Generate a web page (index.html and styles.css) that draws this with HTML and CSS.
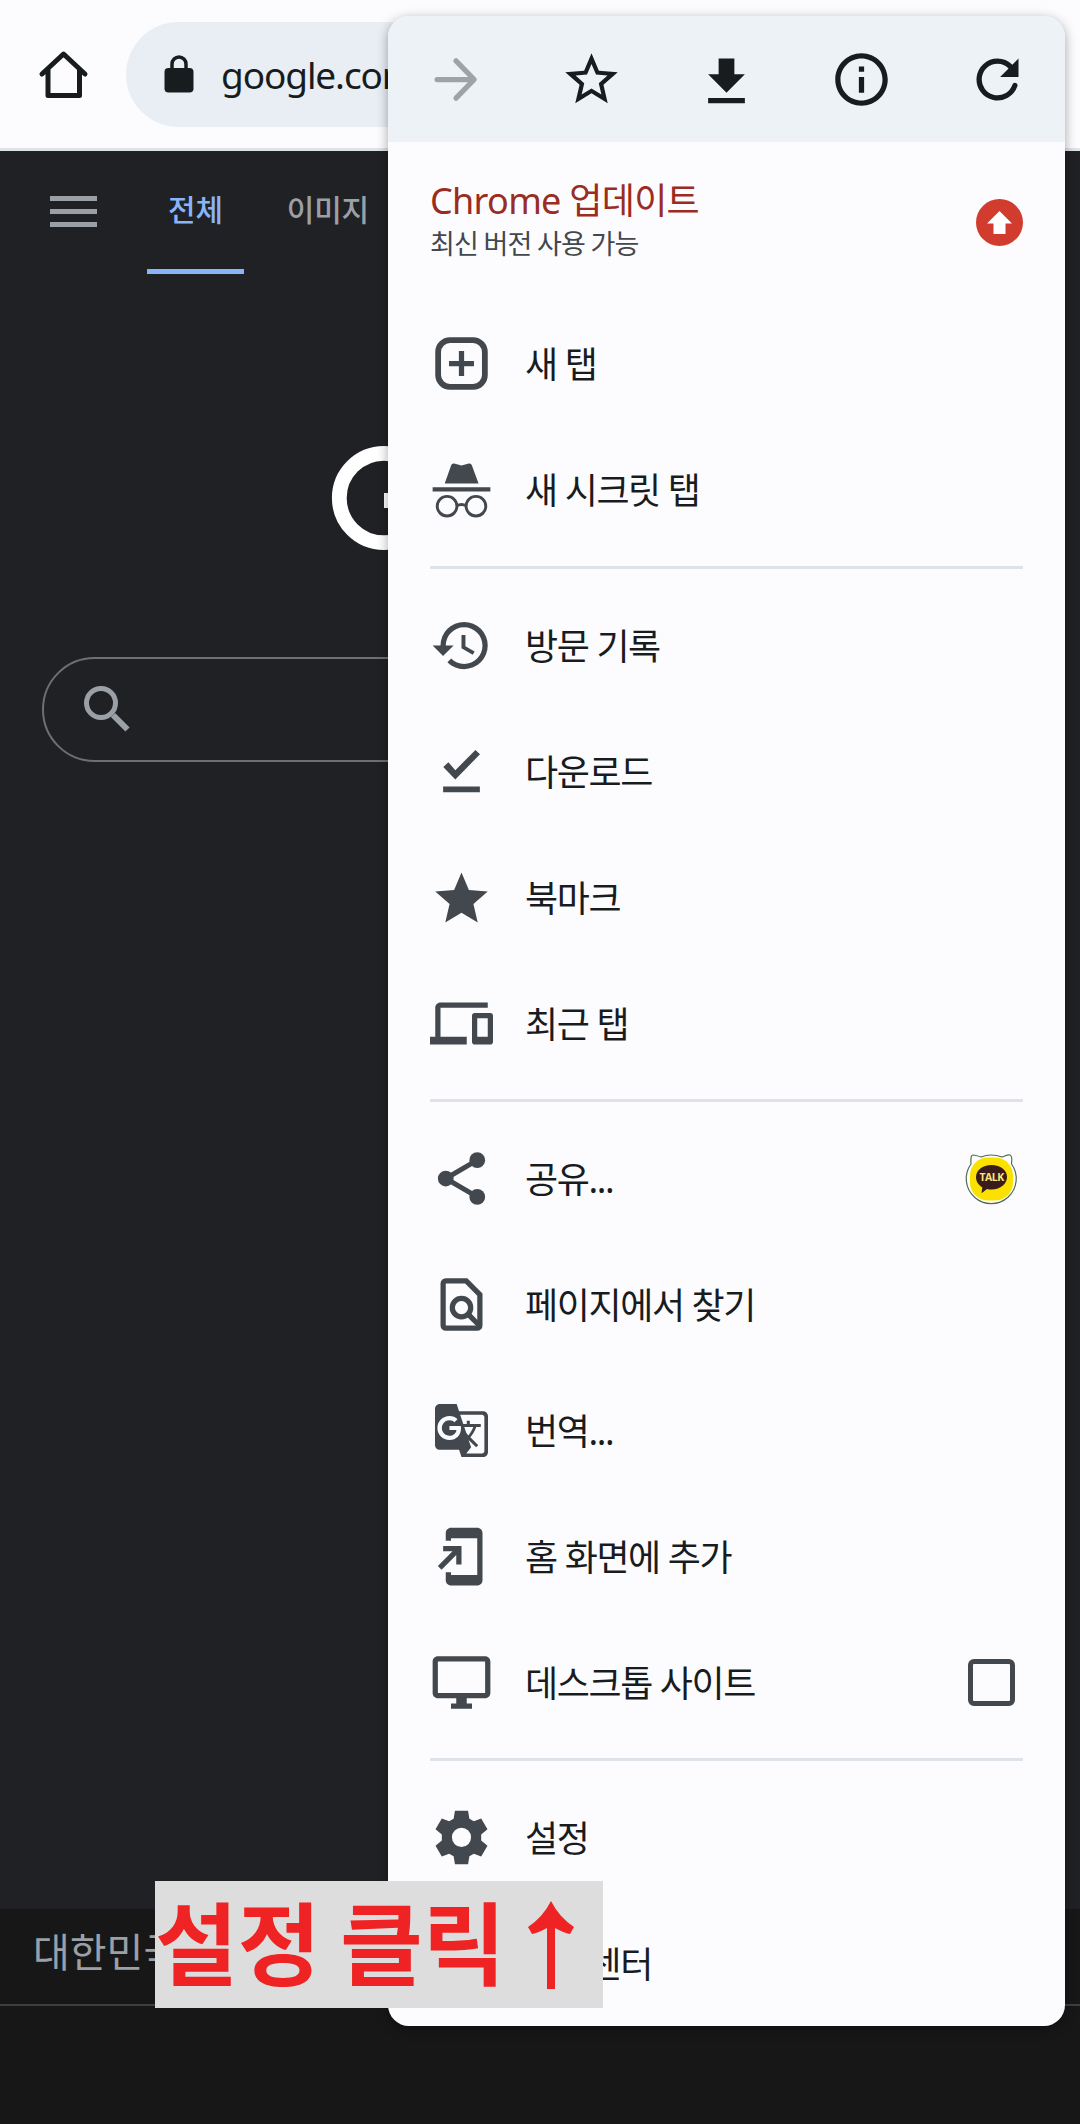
FILE: index.html
```html
<!DOCTYPE html>
<html lang="ko">
<head>
    <meta charset="UTF-8">
    <title>Google</title>
    <link rel="stylesheet" href="styles.css">
</head>
<body>
    <div class="screen">
        <header class="toolbar">
            <svg class="home" viewBox="0 0 63 63"><path d="M10 31 31.500 11 53 31M16 27v25.500h31.500V27"/></svg>
            <div class="url">
                <svg class="lock" viewBox="0 0 30 38"><path d="M8 14V9a7 7 0 0 1 14 0v5" fill="none" stroke="#191c1e" stroke-width="3.500"/><rect x="0.500" y="13" width="29" height="24.500" rx="4" fill="#191c1e"/></svg>
                <span>google.com</span>
            </div>
        </header>
        <main class="page">
            <nav class="tabs">
                <div class="burger"><i></i><i></i><i></i></div>
                <span class="tab active">전체</span>
                <span class="tab">이미지</span>
            </nav>
            <div class="logo">
                <svg viewBox="0 0 106 106"><circle cx="53" cy="53" r="44.700" fill="none" stroke="#fff" stroke-width="14.800"/><path d="M53 48h45v15H53z" fill="#fff"/></svg>
            </div>
            <div class="search">
                <svg viewBox="0 0 46 46"><circle cx="17" cy="17" r="14.500" fill="none" stroke="#9aa0a6" stroke-width="5"/><path d="m29 29 14.500 14.500" stroke="#9aa0a6" stroke-width="6"/></svg>
            </div>
        </main>
        <footer class="footer">
            <div class="country">대한민국</div>
        </footer>

        <div class="menu">
            <div class="menu-top">
                <svg viewBox="0 0 24 24"><path d="M5 12h13.500M12.200 4.900l6.900 7.100-6.900 7.100" fill="none" stroke="#9fa3a6" stroke-width="2" stroke-linecap="round" stroke-linejoin="round"/></svg>
                <svg viewBox="0 0 24 24"><path d="m22 9.240-7.190-.62L12 2 9.190 8.630 2 9.240l5.460 4.730L5.820 21 12 17.270 18.180 21l-1.630-7.030L22 9.240zM12 15.400l-3.760 2.270 1-4.280-3.320-2.880 4.380-.38L12 6.100l1.710 4.040 4.380.38-3.320 2.880 1 4.280L12 15.400z"/></svg>
                <svg viewBox="0 -1 24 24"><path d="M19 9h-4V3H9v6H5l7 7 7-7zM5 18v2h14v-2H5z"/></svg>
                <svg viewBox="0 0 24 24"><path d="M11 7h2v2h-2zm0 4h2v6h-2zm1-9C6.480 2 2 6.480 2 12s4.480 10 10 10 10-4.480 10-10S17.520 2 12 2zm0 18c-4.410 0-8-3.590-8-8s3.590-8 8-8 8 3.590 8 8-3.590 8-8 8z"/></svg>
                <svg viewBox="0 0 24 24"><path d="M17.650 6.350A7.960 7.960 0 0 0 12 4a8 8 0 1 0 7.600 10.500 1 1 0 0 0-1.900-.6A6 6 0 1 1 12 6c1.660 0 3.140.69 4.220 1.780L13 11h7V4l-2.350 2.350z"/></svg>
            </div>

            <div class="update">
                <div>
                    <div class="update-title">Chrome 업데이트</div>
                    <div class="update-sub">최신 버전 사용 가능</div>
                </div>
                <svg viewBox="0 0 47 47"><circle cx="23.500" cy="23.500" r="23.500" fill="#d13c2f"/><path d="M23.500 12 36 24.500h-6.500V35h-12V24.500H11z" fill="#fff"/></svg>
            </div>

            <div class="item">
                <svg viewBox="0 0 24 24"><rect x="3.100" y="3.100" width="17.800" height="17.800" rx="4.500" fill="none" stroke="#42484d" stroke-width="2.200"/><path d="M11 7.250h2V11h3.750v2H13v3.750h-2V13H7.250v-2H11z"/></svg>
                <span>새 탭</span>
            </div>
            <div class="item">
                <svg viewBox="0 0 24 24"><path d="M5.600 9.700 8.100 2.700Q8.400 1.900 9.200 2.100L12 2.900l2.800-.8q.8-.2 1.100.6l2.600 7zM1 11.100h22v1.700H1z"/><g fill="none" stroke="#42484d" stroke-width="1.100"><circle cx="6.500" cy="18.350" r="3.750"/><circle cx="17.500" cy="18.350" r="3.750"/><path d="M10.200 18.200q1.800-1 3.600 0"/></g></svg>
                <span>새 시크릿 탭</span>
            </div>
            <hr>
            <div class="item">
                <svg viewBox="0 0 24 24"><path d="M13 3a9 9 0 0 0-9 9H1l3.890 3.890.07.14L9 12H6c0-3.870 3.130-7 7-7s7 3.130 7 7-3.130 7-7 7c-1.930 0-3.680-.79-4.940-2.060l-1.420 1.420C8.270 19.990 10.510 21 13 21a9 9 0 0 0 0-18zm-1 5v5l4.280 2.540.72-1.210-3.500-2.080V8H12z"/></svg>
                <span>방문 기록</span>
            </div>
            <div class="item">
                <svg viewBox="0 0 24 24"><path d="M5.050 10.300 7 8.500l2.650 3L17.300 3.850l1.750 1.600L9.650 15zM5 17.700h14v2.200H5z"/></svg>
                <span>다운로드</span>
            </div>
            <div class="item">
                <svg viewBox="0 -0.500 24 24"><path d="M12 17.270 18.180 21l-1.640-7.030L22 9.240l-7.190-.61L12 2 9.190 8.630 2 9.240l5.460 4.730L5.820 21z"/></svg>
                <span>북마크</span>
            </div>
            <div class="item">
                <svg viewBox="0 0 24 24"><path d="M4 6h18V4H4c-1.100 0-2 .9-2 2v11H0v3h14v-3H4V6zm19 2h-6c-.55 0-1 .45-1 1v10c0 .55.45 1 1 1h6c.55 0 1-.45 1-1V9c0-.55-.45-1-1-1zm-1 9h-4v-7h4v7z"/></svg>
                <span>최근 탭</span>
            </div>
            <hr>
            <div class="item">
                <svg viewBox="0 0 24 24"><path d="M18 5 6 12l12 7" fill="none" stroke="#42484d" stroke-width="1.900"/><circle cx="18" cy="5" r="3"/><circle cx="6" cy="12" r="3"/><circle cx="18" cy="19" r="3"/></svg>
                <span>공유...</span>
                <svg class="end" viewBox="0 4 63 63"><path d="M11 21c-.5-5 0-9 2-9s5 1 8 2q10-4 21 0c3-1 6-2.500 8-2s2 5 1.500 9a25 25 0 1 1-40.500 0z" fill="#fffffa" stroke="#4f6b4f" stroke-width="1.200"/><rect x="10" y="14.500" width="43" height="43" rx="18" fill="#fae100"/><path d="M31.500 22c-9 0-15.500 5.300-15.500 12 0 4.500 2.500 8 6.300 10.300l-.8 6 5.500-4.300q2 .5 4.500.5c9 0 15.500-5.800 15.500-12.500S40.500 22 31.500 22z" fill="#3a1d1a"/><text class="talk" x="31.500" y="38.300">TALK</text></svg>
            </div>
            <div class="item">
                <svg viewBox="0 0 24 24"><g fill="none" stroke="#42484d" stroke-width="2"><path d="M6 3h7.800L19 8.200V20a1 1 0 0 1-1 1H6a1 1 0 0 1-1-1V4a1 1 0 0 1 1-1z"/><circle cx="12" cy="13.200" r="3.500"/><path d="m14.500 15.700 4.300 4.300"/></g></svg>
                <span>페이지에서 찾기</span>
            </div>
            <div class="item">
                <svg viewBox="-1.070 -1.070 26.150 26.150"><path d="M21 4H11l-1-3H3c-1.100 0-2 .9-2 2v15c0 1.100.9 2 2 2h8l1 3h9c1.100 0 2-.9 2-2V6c0-1.100-.9-2-2-2zM7 16c-2.760 0-5-2.240-5-5s2.240-5 5-5c1.350 0 2.480.5 3.350 1.300L9.030 8.570c-.38-.36-1.040-.78-2.030-.78-1.740 0-3.150 1.440-3.150 3.210S5.260 14.210 7 14.210c2.010 0 2.840-1.440 2.920-2.410H7v-1.710h4.680c.07.31.12.61.12 1.020C11.800 13.970 9.890 16 7 16zm6.170-5.420h3.700c-.43 1.250-1.110 2.430-2.050 3.470-.31-.35-.6-.72-.86-1.100l-.79-2.370zm8.330 9.920c0 .55-.45 1-1 1H14l2-2.500-1.040-3.100 3.100 3.100.92-.92-3.300-3.250.02-.02c1.130-1.250 1.930-2.690 2.400-4.220H20v-1.300h-4.530V8h-1.290v1.290h-1.440L11.460 5.500h9.040c.55 0 1 .45 1 1v14z"/></svg>
                <span>번역...</span>
            </div>
            <div class="item">
                <svg viewBox="0 0 24 24"><path d="M18 1H8c-1.100 0-2 .9-2 2v3h2V5h10v14H8v-1H6v3c0 1.100.9 2 2 2h10c1.100 0 2-.9 2-2V3c0-1.100-.9-2-2-2zM10 15h2V8H5v2h3.590L3 15.590 4.410 17 10 11.410z"/></svg>
                <span>홈 화면에 추가</span>
            </div>
            <div class="item">
                <svg viewBox="0 0 24 24"><path d="M21 2H3c-1.100 0-2 .9-2 2v12c0 1.100.9 2 2 2h7v2H8v2h8v-2h-2v-2h7c1.100 0 2-.9 2-2V4c0-1.100-.9-2-2-2zm0 14H3V4h18v12z"/></svg>
                <span>데스크톱 사이트</span>
                <div class="checkbox"></div>
            </div>
            <hr>
            <div class="item">
                <svg viewBox="0 0 24 24"><path fill-rule="evenodd" d="M9.500 1.800h5l.5 3.100 1.700.9 2.800-1 2.400 4.100-2.400 2v2.200l2.400 2-2.400 4.100-2.800-1-1.700.9-.5 3.100h-5L9 19.100l-1.700-.9-2.800 1-2.400-4.100 2.400-2v-2.200l-2.400-2 2.400-4.100 2.800 1L9 4.900zM12 8.300a3.650 3.650 0 1 0 0 7.300 3.650 3.650 0 0 0 0-7.300z"/></svg>
                <span>설정</span>
            </div>
            <div class="item">
                <svg viewBox="0 0 24 24"></svg>
                <span>고객센터</span>
            </div>
        </div>

        <div class="callout"><span>설정 클릭</span><svg viewBox="0 0 46 88"><path d="M19 88V27Q10 32 4 33L0 26Q15 16 23 0q8 16 23 26l-4 7q-6-1-15-6v61z"/></svg></div>
    </div>
</body>
</html>
```
FILE: styles.css
```css
* { box-sizing: border-box; }
body { margin: 0; font-family: "Noto Sans", "Noto Sans CJK KR", sans-serif; background: #171717; color: #191c1e; }
svg { display: block; flex: none; }
.screen { position: relative; width: 1080px; height: 2124px; overflow: hidden; display: flex; flex-direction: column; }

/* browser bar */
.toolbar { height: 151px; background: #fcfcff; border-bottom: 3px solid #dde3e7; padding: 22px 0 0 32px; display: flex; align-items: flex-start; gap: 31px; }
.home { width: 63px; height: 63px; margin-top: 21px; fill: none; stroke: #191c1e; stroke-width: 5; stroke-linecap: round; stroke-linejoin: round; }
.url { width: 800px; height: 105px; border-radius: 53px; background: #e8eef4; padding: 0 38px; display: flex; align-items: center; gap: 27px; font-size: 37px; letter-spacing: -1.1px; }
.lock { width: 30px; height: 38px; margin-bottom: 2px; }

/* page behind the menu */
.page { height: 1758px; background: #202124; }
.tabs { height: 123px; display: flex; padding-left: 50px; }
.burger { width: 47px; margin: 45px 50px 0 0; display: flex; flex-direction: column; gap: 8px; }
.burger i { height: 5px; background: #9aa0a6; }
.tab { height: 123px; line-height: 117px; padding: 0 21px; margin-right: 22px; font-size: 30px; font-weight: 500; letter-spacing: -0.2px; color: #9aa0a6; }
.tab.active { color: #8ab4f8; border-bottom: 5px solid #8ab4f8; }
.logo { padding: 171px 0 0 331px; }
.logo svg { width: 106px; height: 106px; }
.search { height: 105px; margin: 106px 42px 0; border: 2px solid #6c7074; border-radius: 53px; padding: 27px 40px; }
.search svg { width: 46px; height: 46px; }

.footer { flex: 1; background: #171717; }
.country { height: 97px; line-height: 86px; padding-left: 33px; border-bottom: 2px solid #3c4043; color: #9aa0a6; font-size: 40px; }

/* menu */
.menu { position: absolute; left: 388px; top: 16px; width: 677px; height: 2010px; background: #fcfcff; border-radius: 21px; overflow: hidden; box-shadow: 0 3px 12px rgba(0, 0, 0, 0.35); }
.menu-top { height: 126px; background: #edf2f6; display: flex; align-items: center; justify-content: space-around; }
.menu-top svg { width: 63px; height: 63px; fill: #191c1e; }
.update { height: 158px; padding: 0 42px; display: flex; align-items: center; justify-content: space-between; }
.update-title { font-size: 36px; line-height: 45px; letter-spacing: -0.7px; color: #9a2c22; }
.update-sub { font-size: 27px; line-height: 42px; letter-spacing: -0.9px; word-spacing: -0.5px; color: #42484d; }
.update svg { width: 47px; height: 47px; margin-top: 2px; }
.item { height: 126px; padding: 0 42px; display: flex; align-items: center; gap: 32px; font-size: 36px; letter-spacing: -1.4px; word-spacing: 0; }
.item span { margin-top: -2px; }
.item svg { width: 63px; height: 63px; fill: #42484d; }
.item .end { margin-left: auto; }
.talk { font: bold 10.5px "Open Sans", sans-serif; letter-spacing: -0.5px; text-anchor: middle; fill: #fae57a; }
.checkbox { width: 47px; height: 47px; margin: 0 8px 0 auto; border: 5px solid #42484d; border-radius: 6px; }
.menu hr { height: 3px; margin: 13px 42px; border: 0; background: #dde3e8; }
.menu hr:first-of-type { margin-top: 14px; }

/* red hint over everything */
.callout { position: absolute; left: 155px; top: 1881px; width: 448px; height: 127px; background: #ddd; color: #ef2323; display: flex; align-items: center; font-size: 90px; font-weight: bold; line-height: 127px; white-space: nowrap; word-spacing: -4px; }
.callout span { margin-top: -2px; }
.callout svg { width: 46px; height: 88px; margin-left: 22px; fill: #ef2323; }
```
